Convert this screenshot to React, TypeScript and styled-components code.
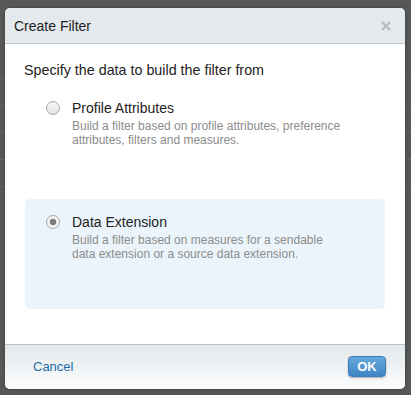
import React, { useState } from "react";
import styled, { createGlobalStyle } from "styled-components";

const GlobalStyle = createGlobalStyle`
  html, body {
    margin: 0;
    padding: 0;
    background: #575757;
    font-family: "Liberation Sans", Arial, sans-serif;
  }
`;

type Choice = "profile" | "extension";

const options: { id: Choice; title: string; text: string }[] = [
    {
        id: "profile",
        title: "Profile Attributes",
        text: "Build a filter based on profile attributes, preference attributes, filters and measures."
    },
    {
        id: "extension",
        title: "Data Extension",
        text: "Build a filter based on measures for a sendable data extension or a source data extension."
    }
];

export default function App() {
    const [choice, setChoice] = useState<Choice>("extension");

    return (
        <Page>
            <GlobalStyle />
            <Backdrop>
                {[0, 1, 2, 3, 4].map(i => <BackRow key={i} />)}
            </Backdrop>
            <Dialog>
                <Header>
                    <Title>Create Filter</Title>
                    <Close aria-label="close">
                        <svg width="10" height="10" viewBox="0 0 10 10">
                            <path d="M1 1 L9 9 M9 1 L1 9" stroke="#b9bdc0" strokeWidth="2.4" />
                        </svg>
                    </Close>
                </Header>
                <Body>
                    <Lead>Specify the data to build the filter from</Lead>
                    {options.map(opt => (
                        <Option key={opt.id} selected={choice === opt.id} onClick={() => setChoice(opt.id)}>
                            <Radio selected={choice === opt.id} />
                            <OptionText>
                                <OptionTitle>{opt.title}</OptionTitle>
                                <OptionDesc>{opt.text}</OptionDesc>
                            </OptionText>
                        </Option>
                    ))}
                </Body>
                <Footer>
                    <CancelLink>Cancel</CancelLink>
                    <OkButton>OK</OkButton>
                </Footer>
            </Dialog>
        </Page>
    );
}

const Page = styled.div`
  position: relative;
  width: 411px;
  height: 395px;
  overflow: hidden;
  padding: 8px 0 0 5px;
  box-sizing: border-box;
`;

const Backdrop = styled.div`
  position: absolute;
  left: 0;
  right: 0;
  top: 44px;
  display: flex;
  flex-direction: column;
  padding-top: 8px;
`;

const BackRow = styled.div`
  height: 27px;
  border-bottom: 1px dotted #6e6e6e;
  box-sizing: border-box;
`;

const Dialog = styled.div`
  position: relative;
  width: 400px;
  height: 381px;
  background: #fff;
  border-radius: 5px;
  overflow: hidden;
  display: flex;
  flex-direction: column;
  box-shadow: 0 0 3px rgba(0, 0, 0, 0.35);
`;

const Header = styled.div`
  height: 36px;
  flex: none;
  box-sizing: border-box;
  background: #e3e9ec;
  border-bottom: 1px solid #c3c8cb;
  display: flex;
  align-items: center;
  justify-content: space-between;
  padding: 0 14px 0 9px;
`;

const Title = styled.h2`
  margin: 0;
  font-size: 14px;
  font-weight: normal;
  color: #222;
`;

const Close = styled.span`
  display: flex;
  width: 10px;
  height: 10px;
`;

const Body = styled.div`
  flex: 1;
  display: flex;
  flex-direction: column;
  padding: 17px 20px 0 20px;
  gap: 4px;
`;

const Lead = styled.p`
  margin: 0 0 2px -1px;
  font-size: 14.3px;
  line-height: 18px;
  color: #222;
`;

const Option = styled.div<{ selected: boolean }>`
  height: 110px;
  box-sizing: border-box;
  border-radius: 5px;
  background: ${p => (p.selected ? "#ebf4fa" : "transparent")};
  display: flex;
  align-items: flex-start;
  padding: 14px 20px 0 21px;
  gap: 12px;
  cursor: pointer;
`;

const Radio = styled.span<{ selected: boolean }>`
  flex: none;
  width: 14px;
  height: 14px;
  margin-top: 2px;
  border-radius: 50%;
  box-sizing: border-box;
  border: 1px solid #a9a9a9;
  background: ${p =>
    p.selected
        ? "radial-gradient(circle, #7d7d7d 0 3px, #f2f2f2 3.6px)"
        : "linear-gradient(#f7f7f7, #e3e3e3)"};
`;

const OptionText = styled.div`
  display: flex;
  flex-direction: column;
  max-width: 276px;
`;

const OptionTitle = styled.div`
  font-size: 14px;
  line-height: 18px;
  color: #222;
`;

const OptionDesc = styled.div`
  margin-top: 2px;
  font-size: 12px;
  line-height: 14px;
  color: #8c8c8c;
`;

const Footer = styled.div`
  height: 45px;
  flex: none;
  box-sizing: border-box;
  border-top: 1px solid #bfc4c8;
  background: linear-gradient(#e3e9ec, #fbfcfd);
  display: flex;
  align-items: center;
  justify-content: space-between;
  padding: 0 19px 2px 28px;
`;

const CancelLink = styled.a`
  font-size: 13px;
  color: #1f6aa8;
  cursor: pointer;
`;

const OkButton = styled.button`
  width: 38px;
  height: 21px;
  border: 1px solid #3a7db8;
  border-radius: 4px;
  background: linear-gradient(#65a8dc, #3e86c4);
  color: #fff;
  font-family: "Liberation Sans", Arial, sans-serif;
  font-weight: bold;
  font-size: 13px;
  padding: 0;
  box-shadow: 0 1px 2px rgba(0, 0, 0, 0.3);
  cursor: pointer;
`;
